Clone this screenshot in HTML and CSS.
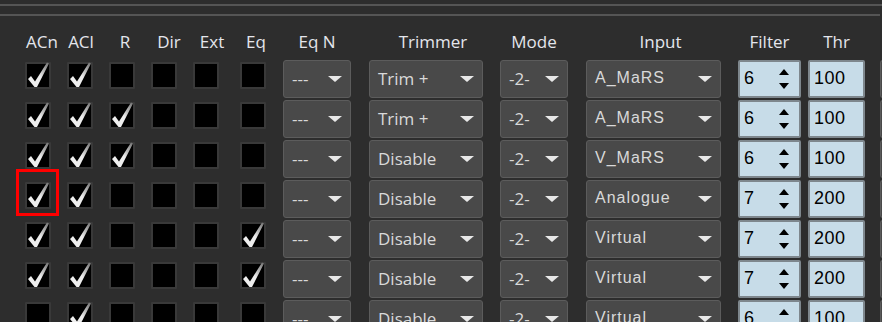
FILE: index.html
```html
<!DOCTYPE html>
<html>
<head>
<meta charset="utf-8">
<link rel="stylesheet" href="styles.css">
</head>
<body>
<svg class="defs" width="0" height="0" aria-hidden="true">
  <defs>
    <linearGradient id="chkgrad" x1="0" y1="1" x2="1" y2="0">
      <stop offset="0" stop-color="#f2f2f2"/>
      <stop offset="0.5" stop-color="#ececec"/>
      <stop offset="1" stop-color="#6c6c6c"/>
    </linearGradient>
    <symbol id="chk" viewBox="0 0 26 27">
      <polygon points="3,17 6,14 10,19.5 22,0.5 24,1.5 12,25 9.5,25" fill="url(#chkgrad)"/>
    </symbol>
  </defs>
</svg>
<div class="rule rule-top"></div>
<div class="rule rule-second"></div>

<div class="grid head">
  <div class="h w-cb h-acn">ACn</div>
  <div class="h w-cb h-acl">ACl</div>
  <div class="h w-cb h-r">R</div>
  <div class="h w-cb h-dir">Dir</div>
  <div class="h w-cb h-ext">Ext</div>
  <div class="h w-cb h-eq">Eq</div>
  <div class="h w-sm">Eq N</div>
  <div class="h w-trim h-trim">Trimmer</div>
  <div class="h w-sm">Mode</div>
  <div class="h w-input h-input">Input</div>
  <div class="h w-filter">Filter</div>
  <div class="h w-thr">Thr</div>
  <div></div>
</div>

<div class="grid body">
  <!-- row 1 -->
  <div class="cb on"><svg><use href="#chk"/></svg></div>
  <div class="cb on"><svg><use href="#chk"/></svg></div>
  <div class="cb"></div>
  <div class="cb"></div>
  <div class="cb"></div>
  <div class="cb"></div>
  <div class="dd w-sm"><span>---</span><i class="arr"></i></div>
  <div class="dd w-trim"><span>Trim +</span><i class="arr"></i></div>
  <div class="dd w-sm"><span>-2-</span><i class="arr"></i></div>
  <div class="dd w-input inp"><span>A_MaRS</span><i class="arr"></i></div>
  <div class="spin w-filter"><span>6</span><i class="ud"><b class="up"></b><b class="dn"></b></i></div>
  <div class="spin w-thr"><span>100</span></div>
  <div class="dd w-edge"></div>

  <!-- row 2 -->
  <div class="cb on"><svg><use href="#chk"/></svg></div>
  <div class="cb on"><svg><use href="#chk"/></svg></div>
  <div class="cb on"><svg><use href="#chk"/></svg></div>
  <div class="cb"></div>
  <div class="cb"></div>
  <div class="cb"></div>
  <div class="dd w-sm"><span>---</span><i class="arr"></i></div>
  <div class="dd w-trim"><span>Trim +</span><i class="arr"></i></div>
  <div class="dd w-sm"><span>-2-</span><i class="arr"></i></div>
  <div class="dd w-input inp"><span>A_MaRS</span><i class="arr"></i></div>
  <div class="spin w-filter"><span>6</span><i class="ud"><b class="up"></b><b class="dn"></b></i></div>
  <div class="spin w-thr"><span>100</span></div>
  <div class="dd w-edge"></div>

  <!-- row 3 -->
  <div class="cb on"><svg><use href="#chk"/></svg></div>
  <div class="cb on"><svg><use href="#chk"/></svg></div>
  <div class="cb on"><svg><use href="#chk"/></svg></div>
  <div class="cb"></div>
  <div class="cb"></div>
  <div class="cb"></div>
  <div class="dd w-sm"><span>---</span><i class="arr"></i></div>
  <div class="dd w-trim"><span>Disable</span><i class="arr"></i></div>
  <div class="dd w-sm"><span>-2-</span><i class="arr"></i></div>
  <div class="dd w-input inp"><span>V_MaRS</span><i class="arr"></i></div>
  <div class="spin w-filter"><span>6</span><i class="ud"><b class="up"></b><b class="dn"></b></i></div>
  <div class="spin w-thr"><span>100</span></div>
  <div class="dd w-edge"></div>

  <!-- row 4 -->
  <div class="cb on hl"><svg><use href="#chk"/></svg></div>
  <div class="cb on"><svg><use href="#chk"/></svg></div>
  <div class="cb"></div>
  <div class="cb"></div>
  <div class="cb"></div>
  <div class="cb"></div>
  <div class="dd w-sm"><span>---</span><i class="arr"></i></div>
  <div class="dd w-trim"><span>Disable</span><i class="arr"></i></div>
  <div class="dd w-sm"><span>-2-</span><i class="arr"></i></div>
  <div class="dd w-input inp"><span>Analogue</span><i class="arr"></i></div>
  <div class="spin w-filter"><span>7</span><i class="ud"><b class="up"></b><b class="dn"></b></i></div>
  <div class="spin w-thr"><span>200</span></div>
  <div class="dd w-edge"></div>

  <!-- row 5 -->
  <div class="cb on"><svg><use href="#chk"/></svg></div>
  <div class="cb on"><svg><use href="#chk"/></svg></div>
  <div class="cb"></div>
  <div class="cb"></div>
  <div class="cb"></div>
  <div class="cb on"><svg><use href="#chk"/></svg></div>
  <div class="dd w-sm"><span>---</span><i class="arr"></i></div>
  <div class="dd w-trim"><span>Disable</span><i class="arr"></i></div>
  <div class="dd w-sm"><span>-2-</span><i class="arr"></i></div>
  <div class="dd w-input inp"><span>Virtual</span><i class="arr"></i></div>
  <div class="spin w-filter"><span>7</span><i class="ud"><b class="up"></b><b class="dn"></b></i></div>
  <div class="spin w-thr"><span>200</span></div>
  <div class="dd w-edge"></div>

  <!-- row 6 -->
  <div class="cb on"><svg><use href="#chk"/></svg></div>
  <div class="cb on"><svg><use href="#chk"/></svg></div>
  <div class="cb"></div>
  <div class="cb"></div>
  <div class="cb"></div>
  <div class="cb on"><svg><use href="#chk"/></svg></div>
  <div class="dd w-sm"><span>---</span><i class="arr"></i></div>
  <div class="dd w-trim"><span>Disable</span><i class="arr"></i></div>
  <div class="dd w-sm"><span>-2-</span><i class="arr"></i></div>
  <div class="dd w-input inp"><span>Virtual</span><i class="arr"></i></div>
  <div class="spin w-filter"><span>7</span><i class="ud"><b class="up"></b><b class="dn"></b></i></div>
  <div class="spin w-thr"><span>200</span></div>
  <div class="dd w-edge"></div>

  <!-- row 7 -->
  <div class="cb"></div>
  <div class="cb on"><svg><use href="#chk"/></svg></div>
  <div class="cb"></div>
  <div class="cb"></div>
  <div class="cb"></div>
  <div class="cb"></div>
  <div class="dd w-sm"><span>---</span><i class="arr"></i></div>
  <div class="dd w-trim"><span>Disable</span><i class="arr"></i></div>
  <div class="dd w-sm"><span>-2-</span><i class="arr"></i></div>
  <div class="dd w-input inp"><span>Virtual</span><i class="arr"></i></div>
  <div class="spin w-filter"><span>6</span><i class="ud"><b class="up"></b><b class="dn"></b></i></div>
  <div class="spin w-thr"><span>100</span></div>
  <div class="dd w-edge"></div>
</div>
</body>
</html>
```

FILE: styles.css
```css
html, body {
  margin: 0;
  padding: 0;
}
body {
  width: 882px;
  height: 322px;
  overflow: hidden;
  background: #2d2d2d;
  font-family: "Open Sans", "DejaVu Sans", sans-serif;
  color: #e2e4ea;
}
.defs {
  position: absolute;
  width: 0;
  height: 0;
}
.rule {
  height: 2px;
  background: #555555;
}
.rule-top {
  margin-top: 4px;
}
.rule-second {
  margin-top: 8px;
  width: 880px;
}

.grid {
  display: grid;
  grid-template-columns: 42px 42px 42px 42px 47px 43px 86px 131px 86px 152px 70px 72px 20px;
  padding-left: 25px;
}
.head {
  margin-top: 14px;
  height: 23px;
}
.body {
  margin-top: 7px;
  grid-auto-rows: 38px;
  row-gap: 2px;
}

/* column widths */
.w-cb { width: 26px; }
.w-sm { width: 68px; }
.w-trim { width: 114px; }
.w-input { width: 135px; }
.w-filter { width: 63px; }
.w-thr { width: 57px; }
.w-edge { width: 20px; }

/* header labels */
.h {
  box-sizing: border-box;
  display: flex;
  justify-content: center;
  white-space: nowrap;
  font-size: 17px;
  line-height: 23px;
  color: #e4e6ec;
}
.h-acn { padding-left: 8px; }
.h-acl { padding-left: 2px; }
.h-r { padding-left: 6px; }
.h-dir { padding-left: 10px; }
.h-ext { padding-left: 12px; }
.h-eq { padding-left: 6px; }
.h-trim { padding-left: 14px; }
.h-input { padding-left: 14px; }

/* checkboxes */
.cb {
  position: relative;
  box-sizing: border-box;
  width: 26px;
  height: 27px;
  margin-top: 2px;
  background: #000;
  border: 2px solid #393939;
  border-radius: 1px;
}
.cb svg {
  position: absolute;
  left: -2px;
  top: -2px;
  width: 26px;
  height: 27px;
  overflow: visible;
}
.hl::after {
  content: "";
  position: absolute;
  left: -11px;
  top: -15px;
  width: 43px;
  height: 47px;
  box-sizing: border-box;
  border: 3px solid #ff0000;
}

/* dropdowns */
.dd {
  box-sizing: border-box;
  height: 38px;
  display: flex;
  align-items: center;
  justify-content: space-between;
  padding: 0 8px 2px 8px;
  background: #494949;
  border: 1px solid #5c5c5c;
  border-radius: 3px;
  color: #d9d9d9;
  font-size: 17px;
  white-space: nowrap;
}
.dd.inp {
  padding-left: 8px;
  font-family: "Liberation Sans", Arial, sans-serif;
  font-size: 16px;
  letter-spacing: 1px;
}
.arr {
  width: 0;
  height: 0;
  margin-top: 2px;
  border-left: 7px solid transparent;
  border-right: 7px solid transparent;
  border-top: 6px solid #e8e8e8;
}
.w-edge {
  padding: 0;
  border-right: none;
  border-radius: 3px 0 0 3px;
}

/* spin / number boxes */
.spin {
  box-sizing: border-box;
  height: 38px;
  display: flex;
  align-items: center;
  justify-content: space-between;
  padding: 0 10px 1px 4px;
  background: #c7dce8;
  border: 2px solid #7e878d;
  border-radius: 2px;
  color: #000;
  font-family: "Liberation Sans", Arial, sans-serif;
  font-size: 18px;
  letter-spacing: 0.5px;
}
.ud {
  display: flex;
  flex-direction: column;
  justify-content: space-between;
  height: 20px;
  margin-top: 1px;
}
.up, .dn {
  display: block;
  width: 0;
  height: 0;
  border-left: 5.5px solid transparent;
  border-right: 5.5px solid transparent;
}
.up {
  border-bottom: 6px solid #000;
}
.dn {
  border-top: 6px solid #000;
}
```
